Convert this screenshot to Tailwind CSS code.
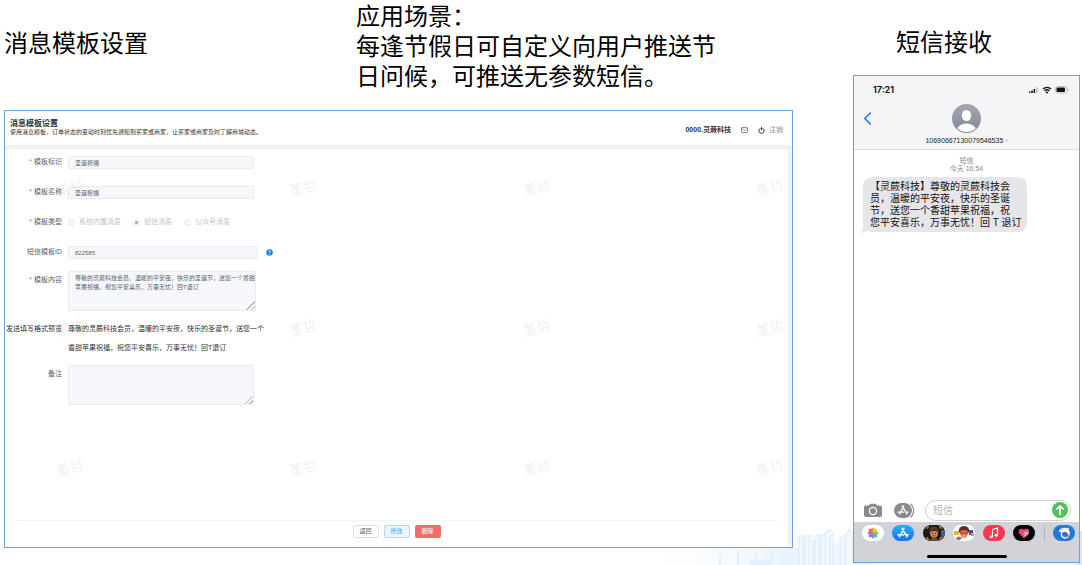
<!DOCTYPE html>
<html lang="zh-CN">
<head>
<meta charset="UTF-8"/>
<meta name="viewport" content="width=device-width, initial-scale=1"/>
<title>消息模板设置</title>
<script src="https://cdn.jsdelivr.net/npm/@tailwindcss/browser@4"></script>
</head>
<body class="relative flex min-h-screen overflow-x-hidden bg-white pl-1 pr-[2px] font-['Liberation_Sans','Noto_Sans_CJK_SC',sans-serif] text-black">

<!-- skyline behind both panels -->
<svg class="absolute bottom-0 right-0 -z-10 h-[56px] w-[422px]" viewBox="0 0 422 56" fill="none" aria-hidden="true">
  <defs>
    <linearGradient id="sky" x1="0" x2="1"><stop offset="0" stop-color="#fff"/><stop offset=".5" stop-color="#f6fafe"/><stop offset="1" stop-color="#e8f2fc"/></linearGradient>
  </defs>
  <path d="M0 39h138v17H0z" fill="url(#sky)"/>
  <path d="M138 56V27h7v-2h6v5h5v-5h8l2-4h4l2 4v9h8v-5l7-6 2-3 2 3 3 3h4v-12l2-1h6v34h5V22h211v34z" fill="#f1f7fe"/>
  <path d="M139 56V27h6v29M149 56V27h6v29M159 56V26h6v30M165 25l2-4h4l2 4v31M180 56V29l8-6 1-3 2 3 5 3v30M198 56V14l2-1h6v43M211 56V22h5" stroke="#d9e9fa"/>
  <path d="M60 45v11M78 42v14M96 44v12M112 42v14M124 48v8M143 30v26M153 32v24M161 30v26M170 26v30M185 30v26M193 28v28M202 18v38M209 32v24" stroke="#e2effc" stroke-width="2"/>
  <path d="M90 51h20v5H90z" fill="#e2effc"/><path d="M417 22h5v34h-5z" fill="#d6e8fb"/>
</svg>

<!-- left: template settings -->
<main class="flex flex-1 flex-col pb-[17px]">
  <div class="mb-[18px] flex h-[92px] items-center text-2xl leading-[30px]">
    <h1 class="w-[352px] shrink-0 pb-1">消息模板设置</h1>
    <p class="max-w-[370px]">应用场景<span class="font-['Noto_Sans_CJK_TC']">：</span><br/>每逢节假日可自定义向用户推送节日问候，可推送无参数短信。</p>
  </div>

  <section class="flex flex-1 flex-col border border-[#6ba4dc] bg-[#eff1f5]">
    <header class="flex h-[34px] items-center justify-between bg-white pl-[5px] pr-[9px] text-[#303133]">
      <div>
        <h2 class="text-[8px] leading-[9px] font-bold">消息模板设置</h2>
        <p class="text-[6px] leading-[9px]">使用消息模板，订单状态的变动时刻优先通知到买家或商家，让买家或商家及时了解商城动态。</p>
      </div>
      <div class="flex items-center pt-1 text-[7px] leading-[10px]">
        <span class="font-bold">0000.灵蕨科技</span>
        <svg class="ml-[10px] h-[6px] w-[7px]" viewBox="0 0 14 12" fill="none" stroke="#606266" stroke-width="1.4"><rect x="1" y="1" width="12" height="10" rx="1"/><path d="m2 3 5 4 5-4"/></svg>
        <button class="ml-[10px] flex items-center gap-1 text-[#909399]">
          <svg class="size-[7px]" viewBox="0 0 14 14" fill="none" stroke="#303133" stroke-width="2" stroke-linecap="round"><path d="M4 3a5.3 5.3 0 1 0 6 0M7 1v5"/></svg>
          注销
        </button>
      </div>
    </header>

    <div class="relative mt-1 mr-1 flex flex-1 flex-col rounded-t-sm bg-white">
      <form id="tpl" class="flex-1 pt-[7px] text-[7px] text-[#606266]">
        <div class="mb-[17px] flex h-[13px] items-center gap-[6px]">
          <label for="code" class="w-[57px] text-right"><span class="text-[#f56c6c]">*</span> 模板标识</label>
          <input id="code" value="圣诞祝福" disabled class="h-[13px] w-[186px] rounded-xs border border-[#e9ebf0] bg-[#f5f7fa] pl-[6px] text-[6px]"/>
        </div>
        <div class="mb-[17px] flex h-[13px] items-center gap-[6px]">
          <label for="name" class="w-[57px] text-right"><span class="text-[#f56c6c]">*</span> 模板名称</label>
          <input id="name" value="圣诞祝福" disabled class="h-[13px] w-[186px] rounded-xs border border-[#e9ebf0] bg-[#f5f7fa] pl-[6px] text-[6px]"/>
        </div>
        <div class="mb-[17px] flex h-[13px] items-center gap-[6px]" role="radiogroup" aria-labelledby="type">
          <span id="type" class="w-[57px] text-right"><span class="text-[#f56c6c]">*</span> 模板类型</span>
          <div class="flex gap-3 text-[#c0c4cc]">
            <label class="flex items-center gap-1"><input type="radio" name="type" disabled class="size-[7px] appearance-none rounded-full border border-[#e4e7ed] bg-[#f5f7fa]"/>系统内置消息</label>
            <label class="flex items-center gap-1"><input type="radio" name="type" disabled checked class="size-[7px] appearance-none rounded-full border border-[#e4e7ed] bg-[radial-gradient(#a8abb2_1px,#f5f7fa_2px)]"/>短信消息</label>
            <label class="flex items-center gap-1"><input type="radio" name="type" disabled class="size-[7px] appearance-none rounded-full border border-[#e4e7ed] bg-[#f5f7fa]"/>公众号消息</label>
          </div>
        </div>
        <div class="mb-3 flex h-[13px] items-center gap-[6px]">
          <label for="sms" class="w-[57px] text-right whitespace-nowrap">短信模板ID</label>
          <input id="sms" value="822585" disabled class="h-[13px] w-[190px] rounded-xs border border-[#e9ebf0] bg-[#f5f7fa] pl-[6px] text-[6px]"/>
          <svg class="ml-[2px] size-[7px]" viewBox="0 0 14 14" fill="none"><circle cx="7" cy="7" r="6.5" fill="#1583e9"/><path d="M5 5.5a2 2 0 1 1 3 1.7c-.7.4-1 .7-1 1.4M7 10v1" stroke="#fff" stroke-width="1.5"/></svg>
        </div>
        <div class="mb-2 flex gap-[6px]">
          <label for="content" class="w-[57px] pt-1 text-right"><span class="text-[#f56c6c]">*</span> 模板内容</label>
          <textarea id="content" disabled class="h-10 w-[188px] resize overflow-hidden rounded-xs border border-[#e9ebf0] bg-[#f5f7fa] pt-[2px] pl-[6px] text-[6px] leading-[9px] [&::-webkit-resizer]:bg-[linear-gradient(135deg,transparent_70%,#b4b7bd_70%,#b4b7bd_76%,transparent_76%,transparent_84%,#b4b7bd_84%,#b4b7bd_90%,transparent_90%)]">尊敬的灵蕨科技会员，温暖的平安夜，快乐的圣诞节，送您一个香甜苹果祝福，祝您平安喜乐，万事无忧！回T退订</textarea>
        </div>
        <div class="mb-2 flex gap-[6px] leading-[19px] text-[#303133]">
          <span class="w-[57px] text-right whitespace-nowrap">发送填写格式预览</span>
          <p class="w-[198px]">尊敬的灵蕨科技会员，温暖的平安夜，快乐的圣诞节，送您一个香甜苹果祝福，祝您平安喜乐，万事无忧！回T退订</p>
        </div>
        <div class="flex gap-[6px]">
          <label for="note" class="w-[57px] pt-1 text-right">备注</label>
          <textarea id="note" disabled class="h-10 w-[186px] resize overflow-hidden rounded-xs border border-[#e9ebf0] bg-[#f5f7fa] [&::-webkit-resizer]:bg-[linear-gradient(135deg,transparent_70%,#b4b7bd_70%,#b4b7bd_76%,transparent_76%,transparent_84%,#b4b7bd_84%,#b4b7bd_90%,transparent_90%)]"></textarea>
        </div>
      </form>

      <footer class="mx-2 flex h-[27px] justify-center gap-[5px] border-t border-[#f2f3f5] pt-1 text-[6px]">
        <button class="h-[13px] w-[26px] rounded-xs border border-[#dcdfe6] text-[#606266]">返回</button>
        <button form="tpl" class="h-[13px] w-[26px] rounded-xs border border-[#b3d8ff] bg-[#ecf5ff] text-[#409eff]">修改</button>
        <button class="h-[13px] w-[26px] rounded-xs bg-[#f56c6c] text-white">删除</button>
      </footer>

      <!-- watermark -->
      <div id="mark" class="pointer-events-none absolute top-[29px] right-1 left-[51px] grid grid-cols-[repeat(3,1fr)_28px] gap-y-[120px] text-sm leading-5 text-black/8" aria-hidden="true"></div>
    </div>
  </section>
</main>

<!-- right: sms on the phone -->
<aside class="ml-[60px] flex w-[227px] shrink-0 flex-col pb-[2px]">
  <h2 class="h-[75px] pt-7 pl-[43px] text-2xl leading-[30px]">短信接收</h2>

  <section class="flex flex-1 flex-col border border-[#6ba4dc] bg-white">
    <header class="border-b border-[#dcdcde] bg-[#f5f5f7] pb-[3px]">
      <div class="flex h-7 items-center justify-between pr-[10px] pl-[19px]">
        <span class="font-[Inter] text-[9px] font-semibold">17:21</span>
        <svg class="h-2 w-10" viewBox="0 0 40 8" fill="none">
          <path d="M0 5.5h1.5V7H0zM2.3 4.5h1.5V7H2.3zM4.6 3h1.5v4H4.6z" fill="#111"/><path d="M7 1h1.5v6H7z" fill="#bbb"/>
          <path d="M14 3.1a6 6 0 0 1 8 0M15.6 4.9a3.5 3.5 0 0 1 4.8 0" stroke="#111" stroke-width="1.4"/><path d="m18 7.8-1.4-1.5a2 2 0 0 1 2.8 0z" fill="#111"/>
          <rect x="26.5" y=".5" width="11.5" height="6.5" rx="1.8" stroke="#aaa" stroke-width=".7"/><rect x="27.5" y="1.5" width="8.5" height="4.5" rx="1" fill="#111"/><path d="M39 2.7v2" stroke="#aaa"/>
        </svg>
      </div>
      <div class="grid grid-cols-[28px_1fr_28px] items-center">
        <button class="pl-[9px]" aria-label="返回"><svg class="h-[13px] w-[9px]" viewBox="0 0 8 12" fill="none" stroke="#2b7ff0" stroke-width="1.6" stroke-linecap="round" stroke-linejoin="round"><path d="M6.5 1 1.5 6l5 5"/></svg></button>
        <svg class="mx-auto size-[29px]" viewBox="0 0 29 29">
          <defs><linearGradient id="av" x2="0" y2="1"><stop stop-color="#a3a7b3"/><stop offset="1" stop-color="#848894"/></linearGradient><clipPath id="avc"><circle cx="14.5" cy="14.5" r="13.5"/></clipPath></defs>
          <circle cx="14.5" cy="14.5" r="14.5" fill="url(#av)"/>
          <ellipse cx="14.5" cy="11.5" rx="4.7" ry="5.6" fill="#fff"/><ellipse cx="14.5" cy="26" rx="9.5" ry="6.5" fill="#fff" clip-path="url(#avc)"/>
        </svg>
      </div>
      <p class="mt-[3px] text-center text-[7px] leading-[10px] text-[#222]">10690667130079546535 <span class="text-[#999]">›</span></p>
    </header>

    <div class="flex-1 pt-[7px]">
      <p class="text-center text-[7px] leading-2 text-[#8e8e93]">短信<br/>今天 16:54</p>
      <div class="relative mt-1 ml-[9px] w-[164px] rounded-[9px] bg-[#e5e5ea] pt-1 pr-1 pb-[3px] pl-[7px] text-[10px] leading-3 text-[#111]">
        <svg class="absolute -bottom-px -left-[3px] h-[9px] w-[10px]" viewBox="0 0 10 9" fill="#e5e5ea"><path d="M3 0v4c0 2-1 3.5-3 4.5 3 .5 5-.3 6.5-1.5L10 4z"/></svg>
        【灵蕨科技】尊敬的灵蕨科技会员，温暖的平安夜，快乐的圣诞节，送您一个香甜苹果祝福，祝<br/>您平安喜乐，万事无忧！回 T 退订
      </div>
    </div>

    <div class="flex h-6 items-center pr-2 pl-[10px]">
      <svg class="h-[15px] w-[18px]" viewBox="0 0 18 15"><path d="M2 2.5h3L6.5.8h5L13 2.5h3c1.2 0 2 .8 2 2V12c0 1.2-.8 2-2 2H2c-1.2 0-2-.8-2-2V4.5c0-1.2.8-2 2-2z" fill="#8a8a8e"/><circle cx="9" cy="8" r="3.6" fill="none" stroke="#fff" stroke-width="1.2"/></svg>
      <svg class="ml-3 h-[15px] w-[21px]" viewBox="0 0 21 15" fill="none" stroke-linecap="round"><rect width="18" height="15" rx="7.5" fill="#8a8a8e"/><path d="M17 1.2c3.5 3 3.5 9.6 0 12.6" stroke="#8a8a8e" stroke-width="1.2"/><path d="m9.8 3-4.3 8M8.2 3l4.6 8M4 9.2h5.5M11.8 9.2H14" stroke="#fff" stroke-width="1.3"/></svg>
      <div class="ml-[10px] flex h-[21px] flex-1 items-center rounded-full border border-[#cfcfd4] bg-white pr-[2px] pl-[7px]">
        <input aria-label="短信" placeholder="短信" class="w-0 flex-1 text-[10px] outline-none placeholder:text-[#b5b5ba]"/>
        <button aria-label="发送"><svg class="size-4" viewBox="0 0 16 16" fill="none"><circle cx="8" cy="8" r="8" fill="#4fc15b"/><path d="M8 12.2V4M4.800 7 8 3.800 11.200 7" stroke="#fff" stroke-width="1.7" stroke-linecap="round" stroke-linejoin="round"/></svg></button>
      </div>
    </div>

    <div class="bg-[#d1d3d9] pt-[3px] pb-1">
      <div class="flex items-center justify-between pr-1 pl-2">
        <svg class="h-4 w-[22px]" viewBox="0 0 22 16"><rect width="22" height="16" rx="8" fill="#fff"/>
          <g opacity=".9"><ellipse cx="11" cy="5" rx="1.7" ry="2.6" fill="#f79a1e"/><ellipse cx="11" cy="5" rx="1.7" ry="2.6" fill="#e6cf2e" transform="rotate(45 11 8)"/><ellipse cx="11" cy="5" rx="1.7" ry="2.6" fill="#8fc73e" transform="rotate(90 11 8)"/><ellipse cx="11" cy="5" rx="1.7" ry="2.6" fill="#3fb08f" transform="rotate(135 11 8)"/><ellipse cx="11" cy="5" rx="1.7" ry="2.6" fill="#5a93d8" transform="rotate(180 11 8)"/><ellipse cx="11" cy="5" rx="1.7" ry="2.6" fill="#8a6cc0" transform="rotate(225 11 8)"/><ellipse cx="11" cy="5" rx="1.7" ry="2.6" fill="#c765a5" transform="rotate(270 11 8)"/><ellipse cx="11" cy="5" rx="1.7" ry="2.6" fill="#ee5144" transform="rotate(315 11 8)"/></g></svg>
        <svg class="h-4 w-[22px]" viewBox="0 0 22 16" fill="none" stroke-linecap="round"><defs><linearGradient id="as" x2="0" y2="1"><stop stop-color="#21b3fa"/><stop offset="1" stop-color="#1c6ff0"/></linearGradient></defs><rect width="22" height="16" rx="8" fill="url(#as)"/><path d="m12 3.3-4.6 8.5M10 3.3l5 8.5M5.800 9.700h6M14 9.700h2.300" stroke="#fff" stroke-width="1.4"/></svg>
        <svg class="h-4 w-[22px]" viewBox="0 0 22 16"><defs><clipPath id="m1"><rect width="22" height="16" rx="8"/></clipPath></defs><g clip-path="url(#m1)"><path d="M0 0h22v16H0z" fill="#1d1a12"/><path d="M18 5h4v8h-4z" fill="#4a5a8c"/><path d="M4 4V2h2M16 2h2v2M4 12v2h2M16 14h2v-2" fill="none" stroke="#d9b23c"/><ellipse cx="11" cy="6" rx="5" ry="4.5" fill="#5b3523"/><ellipse cx="11" cy="8.5" rx="3.8" ry="4.3" fill="#c98a66"/><path d="M6.800 7C7 3 15 3 15.200 7 12 5.500 9 6 6.800 7z" fill="#4a2a1c"/><circle cx="9.5" cy="8.3" r=".6" fill="#222"/><circle cx="12.5" cy="8.3" r=".6" fill="#222"/><path d="M9.500 10.700h3" stroke="#7c3527" stroke-width=".8"/><path d="M6 16c1-4 9-4 10 0z" fill="#7a4a33"/></g></svg>
        <svg class="h-4 w-[22px]" viewBox="0 0 22 16"><defs><clipPath id="m2"><rect width="22" height="16" rx="8"/></clipPath></defs><g clip-path="url(#m2)"><path d="M0 0h22v16H0z" fill="#fff"/><path d="M1 6h5v4H1z" fill="#e8b13a"/><path d="M16 5h4v5h-4z" fill="#45508c"/><path d="M18 8h3v3h-3z" fill="#e0a030"/><ellipse cx="11" cy="5.5" rx="5.2" ry="4.5" fill="#5e3524"/><ellipse cx="11" cy="8.5" rx="4" ry="4.5" fill="#d59a76"/><path d="M6.500 6C8 3 14 3 15.500 6c-3-1-6-1-9 0z" fill="#4a2a1c"/><path d="M9 10.200 6.800 8c-.8-1.400 1-2.500 2.200-1 1.200-1.500 3-.4 2.200 1zM13 10.200 10.800 8c-.8-1.400 1-2.500 2.200-1 1.200-1.500 3-.4 2.200 1z" fill="#ea3b38"/><path d="M3 13c2-2 4-2 6 0l-2 2H4z" fill="#b56b4d"/></g></svg>
        <svg class="h-4 w-[22px]" viewBox="0 0 22 16"><rect width="22" height="16" rx="8" fill="#f6384f"/><path d="M9.500 4.500 14.500 3v7" fill="none" stroke="#fff" stroke-width="1.3"/><path d="M9.500 4.500V12" stroke="#fff" stroke-width="1.1"/><ellipse cx="8.3" cy="11.8" rx="1.7" ry="1.4" fill="#fff"/><ellipse cx="13.3" cy="10.3" rx="1.7" ry="1.4" fill="#fff"/></svg>
        <svg class="h-4 w-[22px]" viewBox="0 0 22 16"><rect width="22" height="16" rx="8" fill="#000"/><path d="M11 13.500 6 8.300C4.300 4.500 8.700 2 11 5c2.300-3 6.700-.5 5 3.300z" fill="#f2477e"/><path d="m11.500 7.500 3 2.500M13 7l2 1.700M11 9.500l2 1.700" stroke="#fff" stroke-width="1" stroke-linecap="round" opacity=".9"/></svg>
        <span class="h-4 w-px bg-[#b4b6bc]"></span>
        <svg class="h-4 w-[22px]" viewBox="0 0 22 16"><rect width="22" height="16" rx="8" fill="#2577d8"/><path d="M5.500 6.500C7 3 11 1.800 14 3.200l2-.8-.5 2.100c1.500 2 1.700 4.500.5 6.500-.5-2-2-3.800-4-4.200-1.500.8-3.500.6-6.500-.3z" fill="#fff"/><path d="M9 7c-1.500 2.500-.5 5.500 3 6 1.500 0 2.600-.7 3.500-1.800" fill="none" stroke="#fff" stroke-width="1.4"/><path d="M13 12.800c1.300-.3 2.300-1.200 2.800-2.600" stroke="#f5a12c" stroke-width="1.5" fill="none"/><circle cx="9.5" cy="4.8" r=".5" fill="#2577d8"/></svg>
      </div>
      <div class="mx-auto mt-[14px] h-[3px] w-20 rounded-full bg-black"></div>
    </div>
  </section>
</aside>

<script>
// repeat the operator name over the card, 4 x 3
document.querySelector('#mark').innerHTML = '<span class="w-7 -rotate-15">董哲</span>'.repeat(12);
</script>
</body>
</html>
